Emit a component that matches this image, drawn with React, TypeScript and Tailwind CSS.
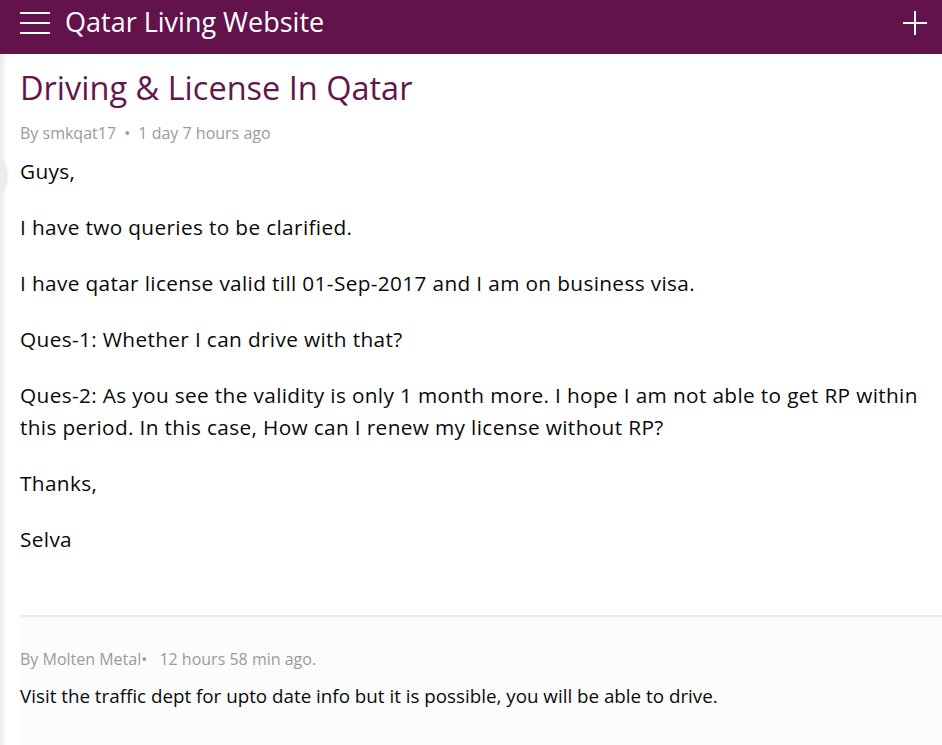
import React from 'react';

const paragraphs = [
  'Guys,',
  'I have two queries to be clarified.',
  'I have qatar license valid till 01-Sep-2017 and I am on business visa.',
  'Ques-1: Whether I can drive with that?',
  'Ques-2: As you see the validity is only 1 month more. I hope I am not able to get RP within this period. In this case, How can I renew my license without RP?',
  'Thanks,',
  'Selva',
];

const App: React.FC = () => {
  return (
    <div className="min-h-[745px] bg-white font-['Open_Sans',sans-serif] relative overflow-hidden">
      {/* Header */}
      <header className="h-[54px] bg-[#62134b] flex items-center pl-5 pr-[14px] pb-[9px]">
        <button className="w-[30px] h-[24px] flex flex-col justify-between py-[1px] mr-[15px]">
          <span className="block h-[2px] w-full bg-white" />
          <span className="block h-[2px] w-full bg-white" />
          <span className="block h-[2px] w-full bg-white" />
        </button>
        <h1 className="text-white text-[27px] leading-none flex-1 -mt-[2px]">Qatar Living Website</h1>
        <svg width="26" height="26" viewBox="0 0 26 26">
          <path d="M13 1v24M1 13h24" stroke="white" strokeWidth="2" />
        </svg>
      </header>

      {/* drawer edge */}
      <div className="absolute left-0 top-[54px] bottom-0 w-[7px] bg-gradient-to-r from-[#e9e9e9] to-transparent pointer-events-none" />
      <div className="absolute left-[-44px] top-[150px] w-[52px] h-[52px] rounded-full bg-[#ececec] blur-[1px] pointer-events-none" />

      {/* Post */}
      <article className="pl-5 pr-[6px] pt-[12px]">
        <h2 className="text-[#63164c] text-[32.5px] leading-[44px]">Driving &amp; License In Qatar</h2>
        <div className="mt-[13px] text-[16px] text-[#9a9a9a] leading-5">
          By smkqat17 <span className="mx-1">•</span> 1 day 7 hours ago
        </div>
        <div className="mt-[12px] text-[20.8px] leading-[32px] tracking-[0.35px] text-[#0a0a0a]">
          {paragraphs.map((p, i) => (
            <p key={i} className="mb-6">{p}</p>
          ))}
        </div>
      </article>

      {/* Comments */}
      <section className="ml-5 mt-[60px] border-t-2 border-[#ececec] bg-[#fcfcfc] pt-[32px] pb-12">
        <div className="text-[16px] text-[#9a9a9a] leading-5">
          By Molten Metal<span className="mr-2">•</span> 12 hours 58 min ago.
        </div>
        <p className="mt-[13px] text-[18.8px] leading-[28px] text-[#0a0a0a]">
          Visit the traffic dept for upto date info but it is possible, you will be able to drive.
        </p>
      </section>
    </div>
  );
};

export default App;
